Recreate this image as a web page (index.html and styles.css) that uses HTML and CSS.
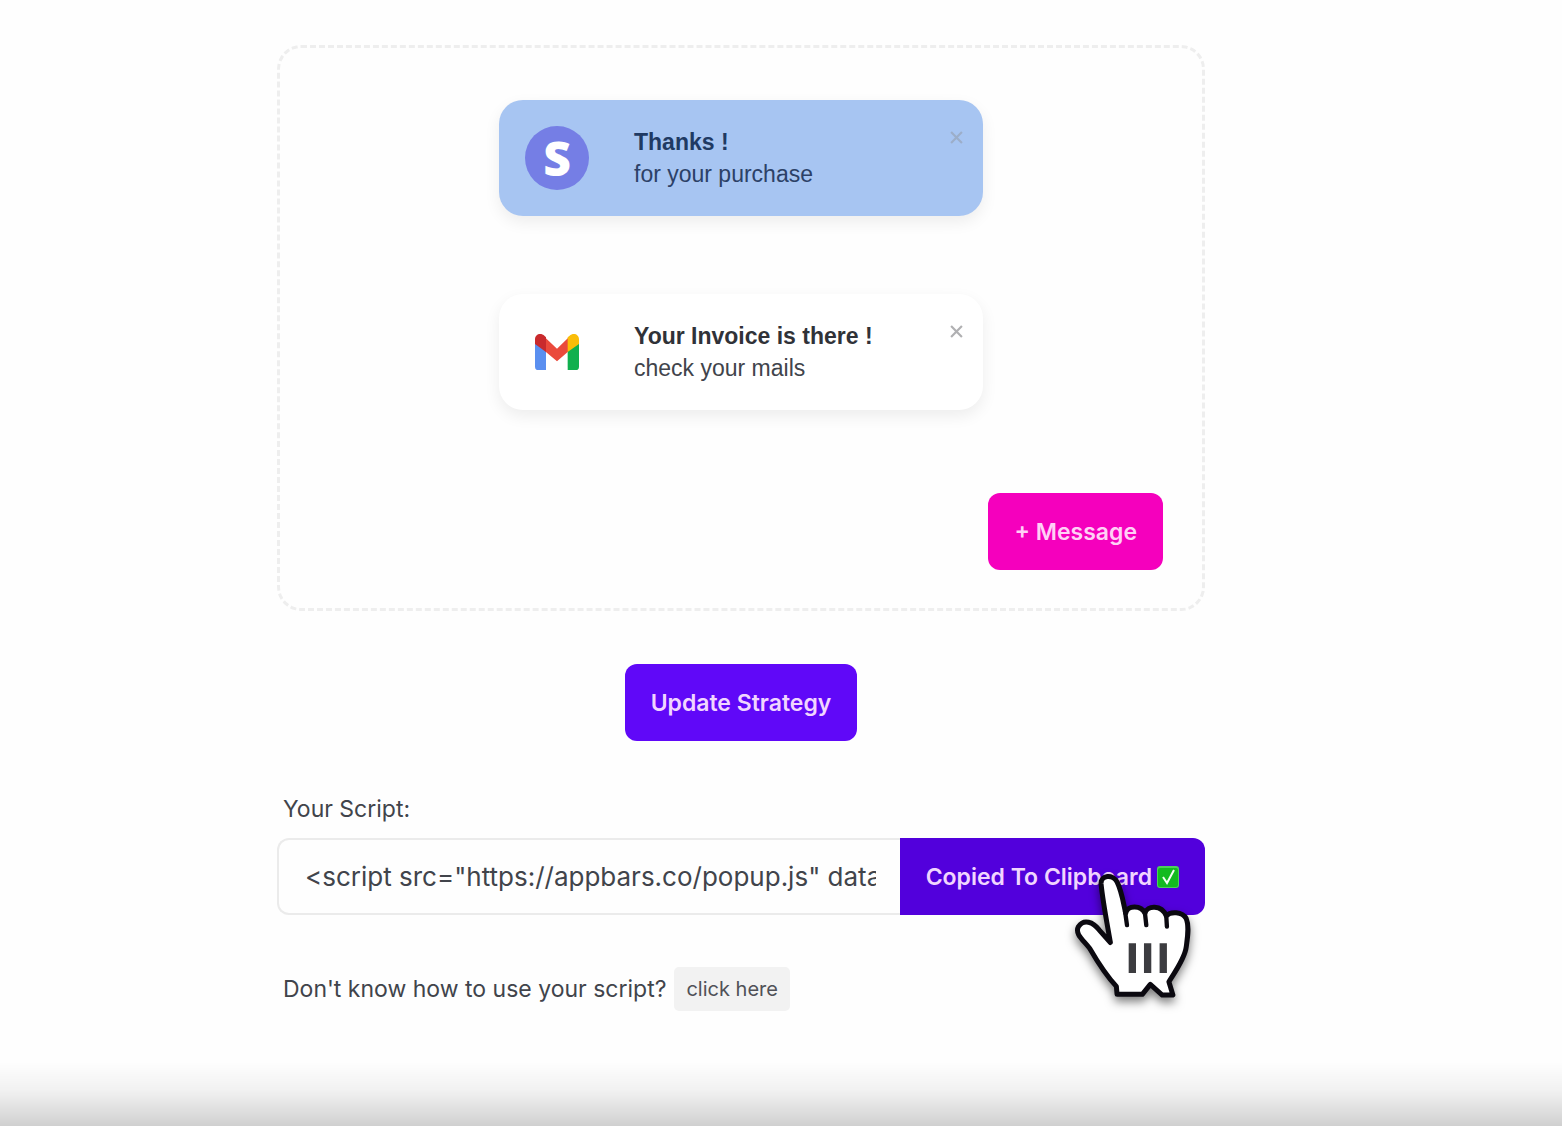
FILE: index.html
```
<!DOCTYPE html>
<html lang="en">
<head>
	<meta charset="UTF-8">
	<meta name="viewport" content="width=device-width, initial-scale=1.0">
	<title>Appbars</title>

	<link rel="stylesheet" href="styles.css">

</head>
<body>
	<main class="container">
		<div class="strategy">
			<div class="card blue">
				<div class="logo stripe">S</div>
				<div class="text">
					<strong>Thanks !</strong>
					<span>for your purchase</span>
				</div>
				<button class="close" type="button" aria-label="Close">
					<svg viewBox="0 0 12 12"><path d="M1 1L11 11M11 1L1 11"/></svg>
				</button>
			</div>
			<div class="card">
				<div class="logo">
					<svg class="gmail" viewBox="0 0 132 108">
						<path fill="#5a8ff0" d="M0 24L33 48V108H10Q0 108 0 98Z"/>
						<path fill="#10b04e" d="M132 24L98 48V108H122Q132 108 132 98Z"/>
						<path fill="#ea4a3c" d="M32 12L66 44L99 12V53L66 82L32 53Z"/>
						<path fill="#c92a2d" d="M0 30V16C0 1 17 -5 29 6L33 10V54Z"/>
						<path fill="#fabd08" d="M132 30V16C132 1 115 -5 103 6L98 10V54Z"/>
					</svg>
				</div>
				<div class="text">
					<strong>Your Invoice is there !</strong>
					<span>check your mails</span>
				</div>
				<button class="close" type="button" aria-label="Close">
					<svg viewBox="0 0 12 12"><path d="M1 1L11 11M11 1L1 11"/></svg>
				</button>
			</div>
			<button class="btn pink" type="button">+ Message</button>
		</div>

		<button class="btn update" type="button">Update Strategy</button>

		<label class="label" for="script">Your Script:</label>
		<div class="script">
			<input id="script" type="text" readonly value="&lt;script src=&quot;https://appbars.co/popup.js&quot; data-id=&quot;1&quot;&gt;&lt;/script&gt;">
			<button class="btn copy" type="button">
				Copied To Clipboard
				<svg class="check" viewBox="0 0 22 22">
					<rect width="22" height="22" rx="3" fill="#4bd05b"/>
					<rect x="1" y="2" width="20" height="19" rx="2" fill="#12bb20"/>
					<path d="M6 11L10 17L17 4" fill="none" stroke="#f2fff2" stroke-width="2"/>
				</svg>
			</button>
			<!-- hand cursor over the copy button -->
			<svg class="cursor" viewBox="100 120 360 400">
				<path class="hand" d="M184 162C182 134 220 132 232 156C246 184 250 214 258 250C262 226 304 224 316 250C322 226 366 224 380 258C392 244 428 244 440 266C450 290 444 324 440 352C436 386 404 430 388 456L400 496H368L332 464L308 494H232L230 470C200 438 172 394 150 356C130 330 104 312 116 290C132 266 160 276 178 300L212 338C202 280 190 220 184 162Z"/>
				<path class="fingers" d="M256 244L262 286M316 250L320 286M380 258L382 290"/>
				<path class="lines" d="M278 340V430M324 340V430M371 340V430"/>
			</svg>
		</div>

		<div class="help">
			<span>Don't know how to use your script?</span>
			<button class="small" type="button">click here</button>
		</div>
	</main>
	<div class="fade"></div>
</body>
</html>
```

FILE: styles.css
```
* {
	box-sizing: border-box;
}

body {
	margin: 0;
	padding: 45px 80px 45px 0;
	min-height: 100vh;
	background-color: #fefefe;
	color: #41444b;
	font-family: Inter, "Liberation Sans", sans-serif;
	font-size: 23px;
	line-height: 32px;
}

button, input {
	font-family: inherit;
	border: 0;
}

button {
	cursor: pointer;
}

.container {
	max-width: 928px;
	margin: 0 auto;
	display: flex;
	flex-direction: column;
}

.strategy {
	display: flex;
	flex-direction: column;
	align-items: center;
	gap: 78px;
	padding: 52px 39px 38px;
	border: 3px dashed #eeeeee;
	border-radius: 24px;
}

.card {
	display: flex;
	align-items: center;
	width: 100%;
	max-width: 484px;
	min-height: 116px;
	padding: 24px 20px 24px 26px;
	border-radius: 24px;
	background-color: #fff;
	box-shadow: 0 6px 16px rgba(0, 0, 0, 0.07);
	font-family: "Liberation Sans", Arial, sans-serif;
}

.card.blue {
	background-color: #a7c5f2;
	color: #2c4167;
}

.logo {
	display: flex;
	align-items: center;
	justify-content: center;
	width: 64px;
	height: 64px;
	margin-right: 45px;
}

.stripe {
	border-radius: 50%;
	background-color: #757ee5;
	color: #fff;
	font-family: "Open Sans", sans-serif;
	font-size: 48px;
	font-weight: 800;
}

.gmail {
	width: 44px;
	height: 36px;
}

.text {
	display: flex;
	flex-direction: column;
	flex: 1;
}

.text strong {
	color: #303238;
}

.blue .text strong {
	color: #203a63;
}

.close {
	display: flex;
	align-self: flex-start;
	padding: 7px 0;
	background: none;
}

.close svg {
	width: 13px;
	height: 13px;
	fill: none;
	stroke: #b0b0b2;
	stroke-width: 2;
}

.blue .close svg {
	stroke: #9caec9;
}

.btn {
	height: 77px;
	padding: 0 26px;
	border-radius: 12px;
	background-color: #6008f8;
	color: #f1d5ff;
	font-size: 23px;
	font-weight: 600;
}

.pink {
	align-self: flex-end;
	margin-top: 5px;
	background-color: #f500bd;
	color: #ffd0f6;
}

.update {
	align-self: center;
	margin: 53px 0 52px;
}

.label {
	margin: 0 6px 13px;
}

.script {
	position: relative;
	display: flex;
}

.script input {
	flex: 1;
	min-width: 0;
	height: 77px;
	padding: 0 24px 0 26px;
	border: 2px solid #ebebeb;
	border-right: 0;
	border-radius: 12px 0 0 12px;
	background-color: #fefefe;
	color: #41444b;
	font-size: 26px;
}

.copy {
	display: flex;
	align-items: center;
	gap: 5px;
	border-radius: 0 12px 12px 0;
	background-color: #5200dc;
}

.check {
	width: 22px;
	height: 22px;
}

.cursor {
	position: absolute;
	top: 32px;
	right: 12px;
	width: 120px;
	height: 133px;
	overflow: visible;
	pointer-events: none;
	filter: drop-shadow(0 5px 5px rgba(0, 0, 0, 0.5));
}

.hand {
	fill: #fff;
	stroke: #0b0910;
	stroke-width: 15;
	stroke-linejoin: round;
}

.fingers {
	fill: none;
	stroke: #0b0910;
	stroke-width: 13;
	stroke-linecap: round;
}

.lines {
	stroke: #3c3c40;
	stroke-width: 22;
}

.help {
	display: flex;
	align-items: center;
	gap: 8px;
	margin: 52px 6px 0;
}

.small {
	height: 44px;
	padding: 0 12px;
	border-radius: 5px;
	background-color: #f2f2f2;
	color: #505157;
	font-size: 20px;
}

.fade {
	position: fixed;
	left: 0;
	right: 0;
	bottom: 0;
	height: 64px;
	background: linear-gradient(to bottom, rgba(0, 0, 0, 0), rgba(0, 0, 0, 0.05) 45%, rgba(0, 0, 0, 0.18));
	pointer-events: none;
}
```
